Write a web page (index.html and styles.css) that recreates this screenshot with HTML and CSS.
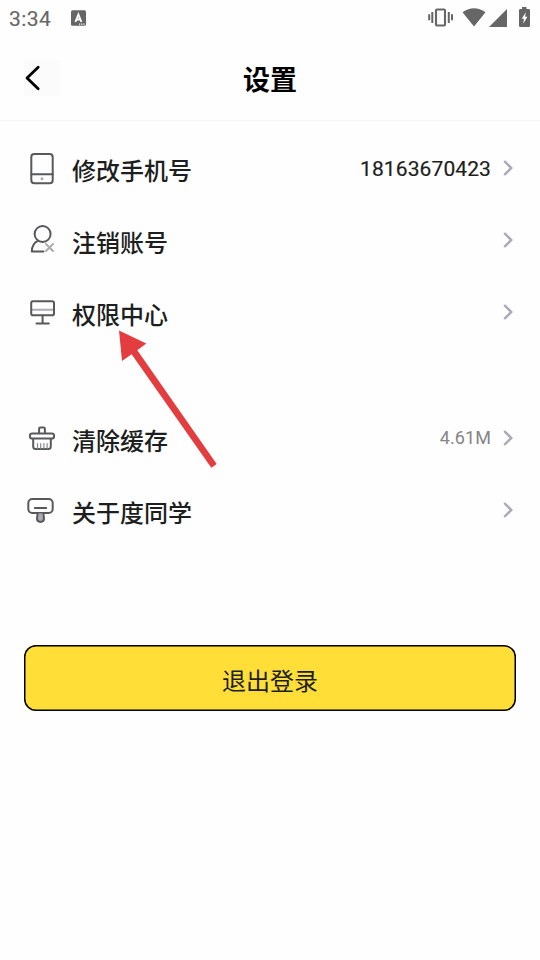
FILE: index.html
```html
<!DOCTYPE html>
<html lang="zh-CN">
<head>
<meta charset="utf-8">
<title>设置</title>
<link rel="stylesheet" href="styles.css">
</head>
<body>
<div class="status">
  <span class="time">3:34</span>
  <svg class="app" width="16" height="16" viewBox="70 10 16 16"><rect x="71" y="10.3" width="15" height="15.5" rx="1.5" fill="#666"/><path d="M75.4 22 78.4 14.6 81.4 22M76.4 19.5h4" fill="none" stroke="#fff" stroke-width="1.9"/><path d="M79 24.2h1.2m1 0h1.2m1 0h1.2" stroke="#fff" stroke-width="1.2"/></svg>
  <svg class="system" width="104" height="24" viewBox="427 6 104 24">
    <rect x="436" y="9.5" width="9" height="16" rx="1" fill="none" stroke="#666" stroke-width="2.1"/>
    <path d="M432.3 12v11M429.2 14.3v6M448.8 12v11M452 14.3v6" fill="none" stroke="#666" stroke-width="2"/>
    <path d="M462.5 12.2Q474 4.2 485.5 12.2L474 26.5Z" fill="#666"/>
    <path d="M507 9v18h-18Z" fill="#666"/>
    <path d="M522 7h4.5v2h2.2q1.3 0 1.3 1.3v15.4q0 1.3-1.3 1.3h-8.4q-1.3 0-1.3-1.3v-15.4q0-1.3 1.3-1.3h1.7Z" fill="#666"/>
    <path d="M525.8 12.3 521.7 18.7h2.3l-.8 5 4.2-6.9h-2.3Z" fill="#fff"/>
  </svg>
</div>
<header class="header">
  <svg class="back" width="36" height="36" viewBox="24 60 36 36"><path d="M38.2 67.3 27 78l11.2 10.8" fill="none" stroke="#000" stroke-width="2.8" stroke-linecap="round" stroke-linejoin="round"/></svg>
  <h1 class="title">设置</h1>
</header>
<main>
  <section class="group">
    <div class="row">
      <svg class="icon" viewBox="24 150 36 36"><rect x="31.3" y="154" width="21.4" height="29.3" rx="3"/><path d="M31.3 174.3h21.4"/><circle cx="42" cy="178.7" r="1.5" class="dot"/></svg>
      <span class="label">修改手机号</span><span class="phone">18163670423</span>
      <svg class="chevron" viewBox="0 0 12 18"><path d="M2.2 2 9.3 9l-7.1 7"/></svg>
    </div>
    <div class="row">
      <svg class="icon" viewBox="24 222 36 36"><circle cx="42.6" cy="234" r="8"/><path d="M38 240.8Q31.8 243.5 31.8 251.6H43.5"/><path class="soft" d="m46 244 7 7m0-7-7 7"/></svg>
      <span class="label">注销账号</span>
      <svg class="chevron" viewBox="0 0 12 18"><path d="M2.2 2 9.3 9l-7.1 7"/></svg>
    </div>
    <div class="row">
      <svg class="icon" viewBox="24 294 36 36"><path class="soft" d="M32 309.7h22"/><rect x="31.2" y="301.2" width="22.8" height="14" rx="1.8"/><path d="M42.6 315.5v7.8M36.5 323.4h12.3"/></svg>
      <span class="label">权限中心</span>
      <svg class="chevron" viewBox="0 0 12 18"><path d="M2.2 2 9.3 9l-7.1 7"/></svg>
    </div>
  </section>
  <section class="group">
    <div class="row">
      <svg class="icon" viewBox="24 420 36 36"><path d="M39.1 433.3v-4.5q0-1.3 1.3-1.3h3.2q1.3 0 1.3 1.3v4.5M33.2 439.2v7.3q0 2.6 2.6 2.6h12.4q2.6 0 2.6-2.6v-7.3"/><rect x="29.9" y="433.4" width="24.2" height="5.2" rx="2.4"/><path class="ticks" d="M37.5 443.5v5M40.7 443.5v5M43.9 443.5v5M47.1 443.5v5"/></svg>
      <span class="label">清除缓存</span><span class="size">4.61M</span>
      <svg class="chevron" viewBox="0 0 12 18"><path d="M2.2 2 9.3 9l-7.1 7"/></svg>
    </div>
    <div class="row">
      <svg class="icon" viewBox="24 492 36 36"><rect x="28.3" y="499" width="24.4" height="14" rx="4"/><path d="M34.8 508.1h11.4"/><path class="grip" d="M37.6 513.5l-.6 5q0 3.4 3.5 3.4t3.5-3.4l-.6-5"/></svg>
      <span class="label">关于度同学</span>
      <svg class="chevron" viewBox="0 0 12 18"><path d="M2.2 2 9.3 9l-7.1 7"/></svg>
    </div>
  </section>
  <button class="logout">退出登录</button>
</main>
<svg class="pointer" width="100" height="140" viewBox="118 330 100 140"><path d="M119 330.5 146.3 343.5 137.3 350.3 216.7 464 211.3 467.7 131.6 354.3 122 361Z" fill="#e43d3f"/></svg>
</body>
</html>
```
FILE: styles.css
```css
* { box-sizing: border-box; }
body {
  margin: 0;
  width: 540px;
  height: 960px;
  overflow: hidden;
  position: relative;
  background: #fefefe;
  color: #1d1e20;
  font-family: Roboto, "Noto Sans CJK SC", sans-serif;
}
svg { display: block; flex: none; }
.status {
  display: flex;
  align-items: center;
  height: 36px;
  padding: 0 9px;
}
.time {
  width: 61px;
  padding-top: 2px;
  font-size: 21px;
  letter-spacing: .4px;
  color: #666;
  -webkit-text-stroke: .15px #666;
}
.system { margin-left: auto; }
.header {
  display: grid;
  grid-template-columns: 36px 1fr 36px;
  align-items: center;
  height: 85px;
  padding: 0 24px;
  border-bottom: 1px solid #f5f5f5;
}
.back { background: #fbfbfb; }
.title {
  margin: 0;
  padding-top: 6px;
  text-align: center;
  font-size: 27px;
  line-height: 40px;
  font-weight: 700;
  color: #000;
}
.group { padding: 0 24px; }
.group:first-child { padding-top: 11px; }
.group + .group { margin-top: 54px; }
.row { display: flex; align-items: center; height: 72px; }
.icon {
  width: 36px;
  height: 36px;
  margin-right: 12px;
  fill: none;
  stroke: #58595b;
  stroke-width: 2;
  stroke-linecap: round;
  stroke-linejoin: round;
}
.icon .dot { fill: #aaabb5; stroke: none; }
.icon .soft { stroke: #aaabb5; }
.icon .ticks { stroke: #88898d; stroke-width: 1.2; }
.icon .grip { fill: #aaabb5; }
.label {
  flex: 1;
  padding-top: 7px;
  font-size: 24px;
  line-height: 36px;
  font-weight: 500;
}
.phone {
  padding-top: 2px;
  font-size: 21px;
  letter-spacing: .1px;
  -webkit-text-stroke: .2px #1d1e20;
}
.size { padding-bottom: 1px; font-size: 18px; letter-spacing: .1px; color: #858585; }
.chevron {
  width: 12px;
  height: 18px;
  margin-left: 11px;
  margin-right: 2px;
  fill: none;
  stroke: #a9a9b3;
  stroke-width: 2.4;
}
.logout {
  display: block;
  width: 492px;
  height: 66px;
  margin: 99px 24px 0;
  padding: 3px 0 0;
  border: 0;
  border-radius: 12px;
  background: #ffde38;
  box-shadow: inset 0 0 0 1.5px #000;
  color: #1d1e20;
  font: 400 24px/36px "Noto Sans CJK SC", sans-serif;
}
.pointer { position: absolute; left: 118px; top: 330px; }
```
